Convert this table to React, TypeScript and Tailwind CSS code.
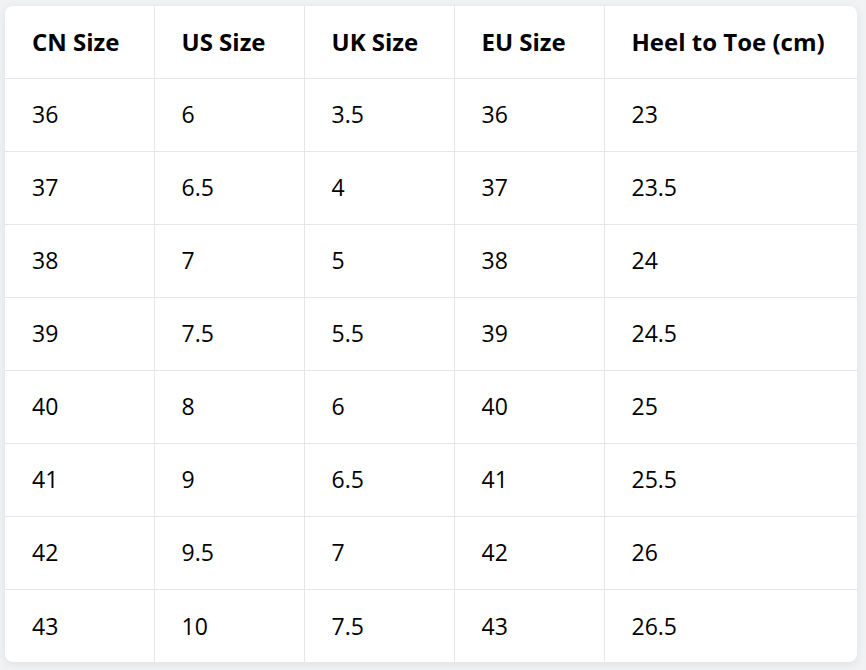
const headers = ["CN Size", "US Size", "UK Size", "EU Size", "Heel to Toe (cm)"];

const rows = [
  ["36", "6", "3.5", "36", "23"],
  ["37", "6.5", "4", "37", "23.5"],
  ["38", "7", "5", "38", "24"],
  ["39", "7.5", "5.5", "39", "24.5"],
  ["40", "8", "6", "40", "25"],
  ["41", "9", "6.5", "41", "25.5"],
  ["42", "9.5", "7", "42", "26"],
  ["43", "10", "7.5", "43", "26.5"],
];

export default function App() {
  return (
    <div className="min-h-screen bg-[#f1f2f4] pl-[5px] pt-[6px] font-['Open_Sans',sans-serif] text-black">
      <div className="w-[852px] overflow-hidden rounded-lg bg-white shadow-[0_2px_10px_rgba(0,0,0,0.08)]">
        <table className="w-full table-fixed border-collapse">
          <colgroup>
            <col className="w-[149px]" />
            <col className="w-[150px]" />
            <col className="w-[150px]" />
            <col className="w-[150px]" />
            <col />
          </colgroup>
          <thead>
            <tr className="h-[72px] border-b border-[#e6e6e6]">
              {headers.map((h, i) => (
                <th
                  key={h}
                  className={`px-[27px] text-left text-[24px] font-bold ${i > 0 ? "border-l border-[#e6e6e6]" : ""}`}
                >
                  {h}
                </th>
              ))}
            </tr>
          </thead>
          <tbody>
            {rows.map((row, r) => (
              <tr key={r} className={`h-[73px] ${r < rows.length - 1 ? "border-b border-[#e6e6e6]" : ""}`}>
                {row.map((cell, i) => (
                  <td
                    key={i}
                    className={`px-[27px] text-[23px] ${i > 0 ? "border-l border-[#e6e6e6]" : ""}`}
                  >
                    {cell}
                  </td>
                ))}
              </tr>
            ))}
          </tbody>
        </table>
      </div>
    </div>
  );
}
